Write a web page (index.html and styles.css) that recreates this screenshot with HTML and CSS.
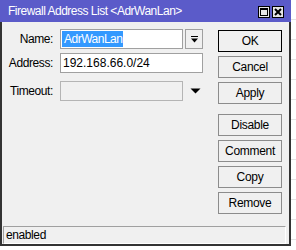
FILE: index.html
```html
<!DOCTYPE html>
<html lang="en">
<head>
    <meta charset="UTF-8">
    <meta name="viewport" content="width=device-width, initial-scale=1.0">
    <title>Firewall Address List</title>
    <link rel="stylesheet" href="styles.css">
</head>
<body>
    <div class="window">
        <div class="titlebar">
            <span class="title">Firewall Address List &lt;AdrWanLan&gt;</span>
            <div class="title-btns">
                <span class="tbtn">
                    <svg width="10" height="10" viewBox="0 0 10 10"><rect x="1.5" y="1.5" width="7" height="7" fill="none" stroke="#000" stroke-width="1"/><rect x="1" y="1" width="8" height="2" fill="#000"/></svg>
                </span>
                <span class="tbtn">
                    <svg width="10" height="10" viewBox="0 0 10 10"><path d="M2 2 L8 8 M8 2 L2 8" stroke="#000" stroke-width="2"/></svg>
                </span>
            </div>
        </div>

        <div class="main">
            <div class="form">
                <label>Name:</label>
                <div class="field"><span class="sel">AdrWanLan</span></div>
                <div class="drop">
                    <svg width="9" height="9" viewBox="0 0 9 9"><rect x="1" y="1" width="7" height="1" fill="#000"/><path d="M1 3.5 H8 L4.5 7.5 Z" fill="#000"/></svg>
                </div>

                <label>Address:</label>
                <div class="field wide num">192.168.66.0/24</div>

                <label class="low">Timeout:</label>
                <div class="field disabled low"></div>
                <div class="arrow low">
                    <svg width="11" height="6" viewBox="0 0 11 6"><path d="M0.5 0.5 H10.5 L5.5 5.5 Z" fill="#000"/></svg>
                </div>
            </div>

            <div class="buttons">
                <button class="default">OK</button>
                <button>Cancel</button>
                <button>Apply</button>
                <button class="gap">Disable</button>
                <button>Comment</button>
                <button>Copy</button>
                <button>Remove</button>
            </div>
        </div>

        <div class="status">enabled</div>
    </div>
</body>
</html>
```

FILE: styles.css
```css
body { margin: 0; font-family: "Liberation Sans", Arial, sans-serif; font-size: 12px; background: repeating-linear-gradient(to bottom, #fff 0 19px, #e4e4e4 19px 20px); height: 250px; }
.window { width: 291px; height: 246px; box-sizing: border-box; background: #f0f0f0; border: 2px solid #333; border-top: none; display: flex; flex-direction: column; }
.titlebar { height: 22px; margin: 0 -2px; background: #5b5bc9; display: flex; align-items: center; justify-content: space-between; padding: 0 7px 0 8px; }
.title { color: #fff; letter-spacing: -0.5px; }
.title-btns { display: flex; gap: 2px; margin-top: 1px; }
.tbtn { width: 12px; height: 12px; box-sizing: border-box; border: 1px solid #000; background: #e6e6e6; display: flex; align-items: center; justify-content: center; }
.main { flex: 1; display: flex; }
.form { width: 201px; margin-top: 7px; display: grid; grid-template-columns: 56px 123px 18px; grid-template-rows: 20px 20px 24px; column-gap: 2px; row-gap: 4px; align-content: start; }
.form label { text-align: right; padding-right: 5px; display: flex; align-items: center; justify-content: flex-end; letter-spacing: -0.4px; }
.field { background: #fff; border: 1px solid #a0a0a0; box-sizing: border-box; display: flex; align-items: center; padding-left: 1px; }
.field.wide { grid-column: span 2; }
.num { padding-left: 2px; }
.field.disabled { background: #f0f0f0; border-color: #b4b4b4; }
.sel { background: #3399ff; color: #fff; letter-spacing: -0.5px; padding: 1px 1px 1px 2px; line-height: 14px; }
.drop { background: #f0f0f0; border: 1px solid #a0a0a0; box-sizing: border-box; display: flex; align-items: center; justify-content: center; }
.arrow { display: flex; align-items: center; justify-content: center; padding-left: 2px; }
.low { height: 20px; align-self: end; }
.buttons { margin-left: 15px; margin-top: 8px; display: flex; flex-direction: column; gap: 4px; }
.buttons button { width: 64px; height: 22px; background: #f0f0f0; border: 1px solid #8c8c8c; font-family: "Liberation Sans", Arial, sans-serif; font-size: 12px; letter-spacing: -0.3px; color: #000; padding: 0; }
.buttons button.default { border-color: #000; }
.buttons button.gap { margin-top: 6px; }
.status { height: 18px; box-sizing: border-box; margin: 0 3px 0 1px; border: 1px solid; border-color: #a0a0a0 #fff #fff #a0a0a0; padding-left: 2px; display: flex; align-items: center; letter-spacing: -0.4px; }
```
